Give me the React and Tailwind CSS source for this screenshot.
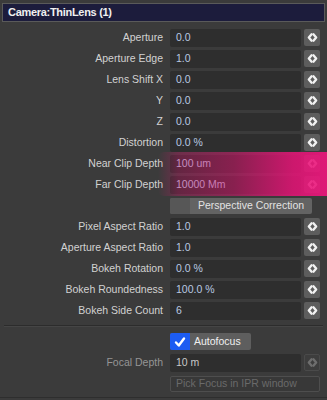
import React from 'react';

const Arrows = ({ dim }) => (
  <svg width="11" height="11" viewBox="0 0 12 12" fill="none" stroke={dim ? '#6e6e6e' : '#f2f2f2'} strokeWidth="2.6" strokeLinecap="round" strokeLinejoin="round">
    <path d="M5 2.5 L2 6 L5 9.5" />
    <path d="M7 2.5 L10 6 L7 9.5" />
  </svg>
);

const rows = [
  ['Aperture', '0.0'],
  ['Aperture Edge', '1.0'],
  ['Lens Shift X', '0.0'],
  ['Y', '0.0'],
  ['Z', '0.0'],
  ['Distortion', '0.0 %'],
  ['Near Clip Depth', '100 um'],
  ['Far Clip Depth', '10000 Mm'],
];

const rows2 = [
  ['Pixel Aspect Ratio', '1.0'],
  ['Aperture Aspect Ratio', '1.0'],
  ['Bokeh Rotation', '0.0 %'],
  ['Bokeh Roundedness', '100.0 %'],
  ['Bokeh Side Count', '6'],
];

const Field = ({ label, value }) => (
  <div className="flex h-[21px] items-center">
    <div className="w-[163px] text-right text-[10.5px] text-[#d2d2d2] whitespace-nowrap">{label}</div>
    <div className="ml-[7px] flex h-[18px] w-[131px] items-center rounded-[2px] bg-[#2e2e2e] pl-[6px] text-[10.5px] text-[#b9c9e2]">
      {value}
    </div>
    <div className="ml-[3px] flex h-[17px] w-[16px] items-center justify-center rounded-[2px] bg-[#5d5d5d]">
      <Arrows />
    </div>
  </div>
);

export default function App() {
  return (
    <div
      className="relative h-[400px] w-[327px] overflow-hidden bg-[#3b3b3b]"
      style={{ fontFamily: '"Liberation Sans", Arial, sans-serif' }}
    >
      <div className="mx-[2px] mt-[3px] flex h-[19px] items-center border border-[#5a5a5a] bg-[#1c1c3c] pl-[5px] text-[11px] font-bold tracking-[-0.3px] text-[#f0f0f0]">
        Camera:ThinLens (1)
      </div>

      <div className="mt-[5px] flex flex-col">
        {rows.map(([l, v]) => (
          <Field key={l} label={l} value={v} />
        ))}
        <div className="flex h-[21px] items-center">
          <div className="ml-[170px] flex h-[16px] w-[142px] overflow-hidden rounded-[2px] bg-[#636363]">
            <div className="h-full w-[20px] bg-[#575757]" />
            <div className="flex flex-1 items-center justify-center text-[10.5px] text-[#e2e2e2]">
              Perspective Correction
            </div>
          </div>
        </div>
        {rows2.map(([l, v]) => (
          <Field key={l} label={l} value={v} />
        ))}
      </div>

      <div className="mx-[4px] mt-[4px] border-t border-[#2c2c2c]" />
      <div className="mx-[4px] border-t border-[#454545]" />

      <div className="mt-[4px] flex flex-col">
        <div className="flex h-[21px] items-center">
          <div className="ml-[170px] flex h-[17px] w-[81px] overflow-hidden rounded-[2px] bg-[#5e5e5e]">
            <div className="flex h-full w-[20px] items-center justify-center bg-[#1d5cf2]">
              <svg width="12" height="12" viewBox="0 0 12 12" fill="none" stroke="#ffffff" strokeWidth="2.4" strokeLinecap="round" strokeLinejoin="round">
                <path d="M2 6.5 L4.8 9.5 L10 2.5" />
              </svg>
            </div>
            <div className="flex items-center pl-[4px] text-[10.5px] text-[#f0f0f0]">Autofocus</div>
          </div>
        </div>
        <div className="flex h-[21px] items-center">
          <div className="w-[163px] text-right text-[10.5px] text-[#959595]">Focal Depth</div>
          <div className="ml-[7px] flex h-[18px] w-[131px] items-center rounded-[2px] bg-[#2e2e2e] pl-[6px] text-[10.5px] text-[#c9c9c9]">
            10 m
          </div>
          <div className="ml-[3px] flex h-[17px] w-[16px] items-center justify-center rounded-[2px] border border-[#4a4a4a] bg-[#3d3d3d]">
            <Arrows dim />
          </div>
        </div>
        <div className="flex h-[21px] items-center">
          <div className="ml-[170px] flex h-[16px] w-[150px] items-center rounded-[2px] border border-[#4e4e4e] bg-[#383838] pl-[5px] text-[10.5px] text-[#6a6a6a]">
            Pick Focus in IPR window
          </div>
        </div>
      </div>

      <div className="absolute bottom-[2px] left-0 right-0 border-t border-[#2e2e2e]" />

      <div
        className="pointer-events-none absolute left-[158px] top-[152px] h-[44px] w-[169px] rounded-l-[6px] bg-[linear-gradient(to_right,rgba(226,18,112,0)_0%,rgba(226,18,112,0.3)_12%,rgba(226,18,112,0.5)_45%,rgba(232,20,120,0.85)_80%,rgba(236,22,124,0.92)_100%)]"
      />
    </div>
  );
}
